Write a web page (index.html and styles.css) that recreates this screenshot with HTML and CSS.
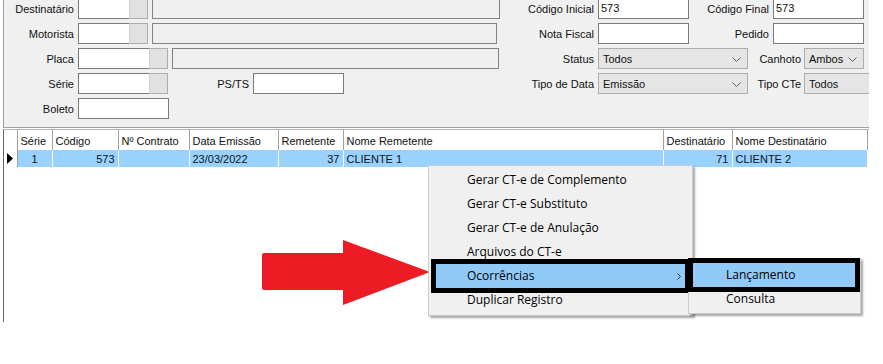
FILE: index.html
```html
<html>
<head>
	<link rel="stylesheet" href="styles.css">
</head>
<body>
<div class="filter_panel">
	<div class="filter_left">
		<div class="filter_row">
			<span class="label" style="width:70px">Destinatário</span>
			<span class="edit" style="width:52px"></span><span class="lookup"></span>
			<span class="readonly" style="width:348px"></span>
		</div>
		<div class="filter_row">
			<span class="label" style="width:70px">Motorista</span>
			<span class="edit" style="width:52px"></span><span class="lookup"></span>
			<span class="readonly" style="width:345px"></span>
		</div>
		<div class="filter_row">
			<span class="label" style="width:70px">Placa</span>
			<span class="edit" style="width:72px"></span><span class="lookup"></span>
			<span class="readonly" style="width:327px"></span>
		</div>
		<div class="filter_row">
			<span class="label" style="width:70px">Série</span>
			<span class="edit" style="width:72px"></span><span class="lookup"></span>
			<span class="label" style="width:77px">PS/TS</span>
			<span class="edit" style="width:91px"></span>
		</div>
		<div class="filter_row">
			<span class="label" style="width:70px">Boleto</span>
			<span class="edit" style="width:91px"></span>
		</div>
	</div>
	<div class="filter_right">
		<div class="filter_row">
			<span class="label" style="width:94px">Código Inicial</span>
			<span class="edit" style="width:91px">573</span>
			<span class="label" style="width:80px">Código Final</span>
			<span class="edit" style="width:91px">573</span>
		</div>
		<div class="filter_row">
			<span class="label" style="width:94px">Nota Fiscal</span>
			<span class="edit" style="width:91px"></span>
			<span class="label" style="width:80px">Pedido</span>
			<span class="edit" style="width:91px"></span>
		</div>
		<div class="filter_row">
			<span class="label" style="width:94px">Status</span>
			<span class="combo" style="width:150px">Todos<svg viewBox="0 0 9 5"><path d="M0.5 0.5 4.5 4.5 8.5 0.5"/></svg></span>
			<span class="label narrow" style="width:53px">Canhoto</span>
			<span class="combo" style="width:60px">Ambos<svg viewBox="0 0 9 5"><path d="M0.5 0.5 4.5 4.5 8.5 0.5"/></svg></span>
		</div>
		<div class="filter_row">
			<span class="label" style="width:94px">Tipo de Data</span>
			<span class="combo" style="width:150px">Emissão<svg viewBox="0 0 9 5"><path d="M0.5 0.5 4.5 4.5 8.5 0.5"/></svg></span>
			<span class="label narrow" style="width:53px">Tipo CTe</span>
			<span class="combo" style="width:80px">Todos</span>
		</div>
	</div>
</div>

<div class="grid_container">
	<table class="grid">
		<colgroup>
			<col style="width:13px">
			<col style="width:35px">
			<col style="width:66px">
			<col style="width:71px">
			<col style="width:89px">
			<col style="width:65px">
			<col style="width:320px">
			<col style="width:69px">
			<col style="width:135px">
		</colgroup>
		<tr class="grid_header">
			<td class="indicator"></td>
			<td>Série</td>
			<td>Código</td>
			<td>Nº Contrato</td>
			<td>Data Emissão</td>
			<td>Remetente</td>
			<td>Nome Remetente</td>
			<td>Destinatário</td>
			<td>Nome Destinatário</td>
		</tr>
		<tr class="grid_row">
			<td class="indicator"><svg viewBox="0 0 6 11"><path d="M0 0 6 5.5 0 11z"/></svg></td>
			<td class="center">1</td>
			<td class="right">573</td>
			<td></td>
			<td>23/03/2022</td>
			<td class="right">37</td>
			<td>CLIENTE 1</td>
			<td class="right">71</td>
			<td>CLIENTE 2</td>
		</tr>
	</table>
</div>

<!-- annotation arrow -->
<svg class="red_arrow" viewBox="0 0 170 66">
	<path d="M2 13 H81 V0 L168 32 L81 65 V50 H2 Q0 50 0 48 V15 Q0 13 2 13z"/>
</svg>

<div class="context_menu">
	<div class="menu_item">Gerar CT-e de Complemento</div>
	<div class="menu_item">Gerar CT-e Substituto</div>
	<div class="menu_item">Gerar CT-e de Anulação</div>
	<div class="menu_item">Arquivos do CT-e</div>
	<div class="menu_item selected">Ocorrências<svg class="submenu_arrow" viewBox="0 0 4 7"><path d="M0.5 0.5 3.5 3.5 0.5 6.5"/></svg></div>
	<div class="menu_item">Duplicar Registro</div>
</div>

<div class="context_menu sub_menu">
	<div class="menu_item selected">Lançamento</div>
	<div class="menu_item">Consulta</div>
</div>
</body>
</html>
```

FILE: styles.css
```css
html {
	background: white;
}

body {
	margin: 0;
	width: 883px;
	height: 364px;
	overflow: hidden;
	position: relative;
	font-family: "Liberation Sans", Arial, sans-serif;
	font-size: 11px;
	color: #111;
}

/* ---------- filter panel ---------- */

.filter_panel {
	margin-left: 3px;
	width: 865px;
	height: 127px;
	background: #f0f0f0;
	border-left: 1px solid #a0a0a0;
	border-bottom: 1px solid #a0a0a0;
	display: flex;
	overflow: hidden;
}

.filter_left {
	width: 498px;
	display: flex;
	flex-direction: column;
	row-gap: 4px;
	margin-top: -2px;
}

.filter_right {
	display: flex;
	flex-direction: column;
	row-gap: 4px;
	margin-top: -2px;
}

.filter_row {
	display: flex;
	height: 21px;
	align-items: stretch;
	flex-shrink: 0;
}

.label {
	display: flex;
	align-items: center;
	justify-content: flex-end;
	margin-right: 4px;
	white-space: nowrap;
	flex-shrink: 0;
}

.label.narrow {
	margin-right: 3px;
}

.edit {
	box-sizing: border-box;
	background: white;
	border: 1px solid #7a7a7a;
	padding: 3px 2px 0 2px;
	flex-shrink: 0;
}

.lookup {
	box-sizing: border-box;
	width: 18px;
	background: #e1e1e1;
	border: 1px solid #adadad;
	border-left-color: #d0d0d0;
	margin-right: 4px;
	flex-shrink: 0;
}

.filter_row .edit + .lookup {
	margin-left: -1px;
	width: 19px;
}

.readonly {
	box-sizing: border-box;
	background: #f0f0f0;
	border: 1px solid #848484;
	flex-shrink: 0;
}

.combo {
	box-sizing: border-box;
	background: #e5e5e5;
	border: 1px solid #adadad;
	display: flex;
	align-items: center;
	justify-content: space-between;
	padding: 1px 6px 0 4px;
	flex-shrink: 0;
}

.combo svg {
	width: 9px;
	height: 5px;
	fill: none;
	stroke: #606060;
	stroke-width: 1;
}

/* ---------- grid ---------- */

.grid_container {
	margin-top: 1px;
	margin-left: 3px;
	height: 192px;
	width: 865px;
	border-left: 1px solid #646464;
	border-top: 1px solid #b4b4b4;
}

.grid {
	border-collapse: collapse;
	table-layout: fixed;
	width: 863px;
	font-size: 11px;
	color: #111;
}

.grid td {
	padding: 0 3px;
	white-space: nowrap;
	overflow: hidden;
	border-right: 1px solid #a0a0a0;
}

.grid_header td {
	height: 20px;
	background: white;
	padding-top: 1px;
}

.grid_row td {
	height: 17px;
	background: #99d1ff;
	border-right: 1px solid white;
}

.grid td.indicator {
	padding: 0;
	background: white;
	border-right: 1px solid #a0a0a0;
}

.indicator svg {
	width: 6px;
	height: 11px;
	display: block;
	margin: 0 0 0 3px;
}

.grid td.center {
	text-align: center;
}

.grid td.right {
	text-align: right;
}

/* ---------- annotation ---------- */

.red_arrow {
	position: absolute;
	left: 262px;
	top: 240px;
	width: 170px;
	height: 66px;
	fill: #ed1c24;
}

/* ---------- context menu ---------- */

.context_menu {
	position: absolute;
	left: 428px;
	top: 165px;
	width: 265px;
	box-sizing: border-box;
	background: #f0f0f0;
	border: 1px solid #cccccc;
	padding: 2px 0 3px 0;
	box-shadow: 2px 2px 2px rgba(0, 0, 0, 0.35);
	font-family: "Open Sans", "Liberation Sans", sans-serif;
	font-size: 12px;
	color: #000;
}

.sub_menu {
	left: 688px;
	top: 258px;
	width: 173px;
	padding-top: 4px;
	padding-bottom: 2px;
}

.menu_item {
	height: 24px;
	line-height: 24px;
	padding-left: 38px;
	position: relative;
}

.sub_menu .menu_item {
	padding-left: 37px;
}

.menu_item.selected {
	background: #91c9f7;
	margin: 0 7px;
	padding-left: 31px;
	outline: 5px solid black;
}

.sub_menu .menu_item.selected {
	margin: 0 5px 0 4px;
	padding-left: 33px;
}

.submenu_arrow {
	position: absolute;
	right: 4px;
	top: 9px;
	width: 4px;
	height: 7px;
	fill: none;
	stroke: #333;
	stroke-width: 1;
}
```
